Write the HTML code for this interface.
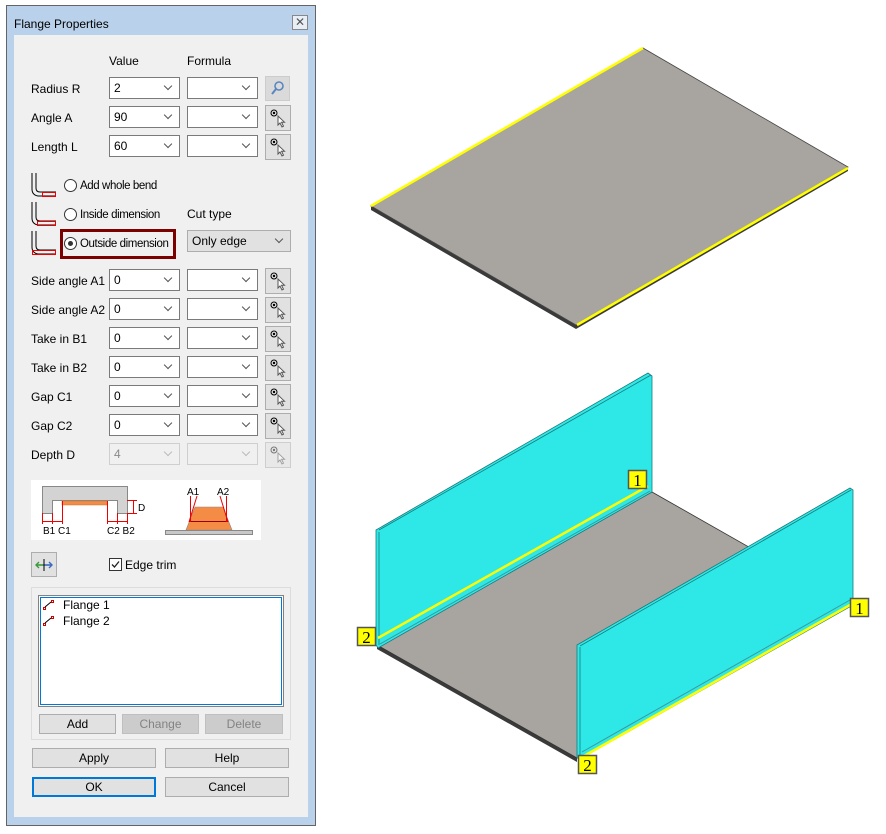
<!DOCTYPE html>
<html><head><meta charset="utf-8"><style>
*{margin:0;padding:0;box-sizing:border-box}
body{width:886px;height:834px;background:#fff;position:relative;overflow:hidden;font-family:"Liberation Sans",sans-serif;font-size:12px;color:#000}
.a{position:absolute}
.win{left:6px;top:5px;width:310px;height:821px;background:#b9d1ea;border:1px solid #646464}
.cont{left:14px;top:35px;width:294px;height:782px;background:#f0f0f0}
.lbl{position:absolute;font-size:12px;white-space:nowrap}
.rl{font-size:11.5px;letter-spacing:-0.4px;line-height:14px}
.cb{position:absolute;height:22px;background:#fff;border:1px solid #7a7a7a;font-size:12px;padding:3px 0 0 4px}
.cb::after{content:"";position:absolute;right:8px;top:5px;width:5px;height:5px;border-right:1px solid #555;border-bottom:1px solid #555;transform:rotate(45deg)}
.dis{background:#f0f0f0;border-color:#cfcfcf;color:#8a8a8a}
.dis::after{border-color:#bbb}
.pb{position:absolute;width:25px;height:25px;background:#e1e1e1;border:1px solid #adadad}
.btn{position:absolute;height:20px;background:#e1e1e1;border:1px solid #adadad;text-align:center;font-size:12px;line-height:18px}
.rd{position:absolute;width:13px;height:13px;border:1px solid #333;border-radius:50%;background:#fff}
</style></head><body>
<div class="a win"></div>
<div class="a lbl" style="left:14px;top:17px">Flange Properties</div>
<div class="a" style="left:292px;top:15px;width:16px;height:15px;border:1px solid #888;background:#e8eef5;font-size:12px;line-height:12px;text-align:center;color:#555">✕</div>
<div class="a cont"></div>

<div class="lbl" style="left:109px;top:54px">Value</div>
<div class="lbl" style="left:187px;top:54px">Formula</div>

<div class="lbl" style="left:31px;top:82px">Radius R</div>
<div class="cb" style="left:109px;top:77px;width:71px">2</div>
<div class="cb" style="left:187px;top:77px;width:71px"></div>
<div class="pb" style="left:265px;top:76px;background:#dadada;border-color:#ccc"><svg width="23" height="23"><circle cx="13" cy="9" r="4" fill="none" stroke="#5a86c0" stroke-width="1.6"/><line x1="10" y1="12" x2="6" y2="17" stroke="#5a86c0" stroke-width="2"/></svg></div>

<div class="lbl" style="left:31px;top:111px">Angle A</div>
<div class="cb" style="left:109px;top:106px;width:71px">90</div>
<div class="cb" style="left:187px;top:106px;width:71px"></div>

<div class="lbl" style="left:31px;top:140px">Length L</div>
<div class="cb" style="left:109px;top:135px;width:71px">60</div>
<div class="cb" style="left:187px;top:135px;width:71px"></div>

<svg class="a" style="left:28px;top:170px" width="30" height="90">
<g fill="none" stroke="#000"><path d="M4 3V19Q4 25 10 26H28"/><path d="M8 3V18Q8 22 12 22H28"/>
<path d="M4 32V48Q4 54 10 55H28"/><path d="M8 32V47Q8 51 12 51H28"/>
<path d="M4 61V77Q4 83 10 84H28"/><path d="M8 61V76Q8 80 12 80H28"/></g>
<g fill="none" stroke="#e00"><rect x="14.5" y="22.5" width="13" height="4"/><rect x="9.5" y="51.5" width="18" height="4"/><rect x="4.5" y="80.5" width="23" height="4"/></g></svg>

<div class="rd" style="left:64px;top:179px"></div><div class="lbl rl" style="left:80px;top:179px">Add whole bend</div>
<div class="rd" style="left:64px;top:208px"></div><div class="lbl rl" style="left:80px;top:208px">Inside dimension</div>
<div class="lbl" style="left:187px;top:207px">Cut type</div>
<div class="a" style="left:60px;top:229px;width:116px;height:30px;border:3px solid #7b0000"></div>
<div class="rd" style="left:64px;top:237px"></div><div class="a" style="left:68px;top:241px;width:5px;height:5px;border-radius:50%;background:#333"></div>
<div class="lbl rl" style="left:80px;top:237px">Outside dimension</div>
<div class="cb" style="left:187px;top:230px;width:104px;background:#e1e1e1;border-color:#adadad">Only edge</div>

<div class="lbl" style="left:31px;top:274px">Side angle A1</div>
<div class="lbl" style="left:31px;top:303px">Side angle A2</div>
<div class="lbl" style="left:31px;top:332px">Take in B1</div>
<div class="lbl" style="left:31px;top:361px">Take in B2</div>
<div class="lbl" style="left:31px;top:390px">Gap C1</div>
<div class="lbl" style="left:31px;top:419px">Gap C2</div>
<div class="lbl" style="left:31px;top:448px">Depth D</div>
<div class="cb" style="left:109px;top:269px;width:71px">0</div><div class="cb" style="left:187px;top:269px;width:71px"></div>
<div class="cb" style="left:109px;top:298px;width:71px">0</div><div class="cb" style="left:187px;top:298px;width:71px"></div>
<div class="cb" style="left:109px;top:327px;width:71px">0</div><div class="cb" style="left:187px;top:327px;width:71px"></div>
<div class="cb" style="left:109px;top:356px;width:71px">0</div><div class="cb" style="left:187px;top:356px;width:71px"></div>
<div class="cb" style="left:109px;top:385px;width:71px">0</div><div class="cb" style="left:187px;top:385px;width:71px"></div>
<div class="cb" style="left:109px;top:414px;width:71px">0</div><div class="cb" style="left:187px;top:414px;width:71px"></div>
<div class="cb dis" style="left:109px;top:443px;width:71px">4</div><div class="cb dis" style="left:187px;top:443px;width:71px"></div>

<svg class="a" style="left:265px;top:105px" width="26" height="370">
<defs><g id="pk"><rect x="0.5" y="0.5" width="25" height="25" fill="#e1e1e1" stroke="#adadad"/><circle cx="9" cy="8" r="3" fill="none" stroke="#000"/><circle cx="9" cy="8" r="1.2"/><path d="M13 11v9l2-2 2 4 1.5-.8-2-4h3z" fill="#fff" stroke="#555"/></g></defs>
<use href="#pk" y="0"/><use href="#pk" y="29"/>
<use href="#pk" y="163"/><use href="#pk" y="192"/><use href="#pk" y="221"/><use href="#pk" y="250"/><use href="#pk" y="279"/><use href="#pk" y="308"/>
<g opacity="0.5"><use href="#pk" y="337"/></g></svg>

<svg class="a" style="left:31px;top:480px" width="230" height="60" font-family="Liberation Sans" font-size="10">
<rect width="230" height="60" fill="#fff"/>
<path d="M11.5 6.5H96.5V33.5H86.5V20.5H21.5V33.5H11.5Z" fill="#d3d3d3" stroke="#888"/>
<rect x="31" y="21" width="45" height="4" fill="#f58c45" stroke="#c87030" stroke-width=".5"/>
<g stroke="#e00" fill="none"><path d="M11.5 33v11M21.5 33v11M31.5 21v23M76.5 21v23M86.5 33v11M96.5 33v11M12 41.5h19M77 41.5h19M96 20.5h10M96 33.5h10M102.5 21v12"/></g>
<text x="107" y="31">D</text>
<text x="12" y="54">B1 C1</text>
<text x="76" y="54">C2 B2</text>
<rect x="134.5" y="50.5" width="87" height="4" fill="#c8c8c8" stroke="#888"/>
<path d="M164 27H192L201 50H155Z" fill="#f58c45" stroke="#888" stroke-width=".6"/>
<line x1="158" y1="41.5" x2="197" y2="41.5" stroke="#900"/>
<g stroke="#e00" fill="none"><path d="M159.5 16v26M166 16l-8 26M195.5 16v26M189 16l8 26"/></g>
<text x="156" y="15">A1</text>
<text x="186" y="15">A2</text>
</svg>

<div class="pb" style="left:31px;top:552px;width:26px"><svg width="24" height="24"><line x1="4" y1="12" x2="12" y2="12" stroke="#3a9a3a" stroke-width="1.6"/><line x1="12" y1="12" x2="20" y2="12" stroke="#3a6ac0" stroke-width="1.6"/><path d="M7 9l-3 3 3 3" fill="none" stroke="#3a9a3a" stroke-width="1.4"/><path d="M17 9l3 3-3 3" fill="none" stroke="#3a6ac0" stroke-width="1.4"/><line x1="12" y1="6" x2="12" y2="18" stroke="#000"/></svg></div>
<div class="a" style="left:109px;top:558px;width:13px;height:13px;border:1px solid #333;background:#fff"><svg width="11" height="11" style="display:block"><path d="M2 5.5l2.5 2.5 4.5-5.5" fill="none" stroke="#222" stroke-width="1.3"/></svg></div>
<div class="lbl" style="left:125px;top:558px">Edge trim</div>

<div class="a" style="left:31px;top:587px;width:260px;height:153px;border:1px solid #dcdcdc"></div>
<div class="a" style="left:38px;top:595px;width:246px;height:112px;border:1px solid #828282;background:#fff"><div style="margin:1px;height:108px;border:1px solid #0078d7"></div></div>
<svg class="a" style="left:42px;top:599px" width="14" height="30"><g fill="none" stroke="#c00"><rect x="1.5" y="8.5" width="2" height="2"/><rect x="9.5" y="1.5" width="2" height="2"/><rect x="1.5" y="24.5" width="2" height="2"/><rect x="9.5" y="17.5" width="2" height="2"/></g><path d="M3 8l6-5M3 24l6-5" stroke="#000"/></svg>
<div class="lbl" style="left:63px;top:598px">Flange 1</div>
<div class="lbl" style="left:63px;top:614px">Flange 2</div>
<div class="btn" style="left:39px;top:714px;width:77px">Add</div>
<div class="btn" style="left:122px;top:714px;width:77px;background:#ccc;border-color:#bfbfbf;color:#838383">Change</div>
<div class="btn" style="left:205px;top:714px;width:78px;background:#ccc;border-color:#bfbfbf;color:#838383">Delete</div>
<div class="btn" style="left:32px;top:748px;width:124px">Apply</div>
<div class="btn" style="left:165px;top:748px;width:124px">Help</div>
<div class="btn" style="left:32px;top:777px;width:124px;border:2px solid #0078d7;line-height:16px">OK</div>
<div class="btn" style="left:165px;top:777px;width:124px">Cancel</div>

<svg class="a" style="left:0;top:0" width="886" height="834">
<path d="M371 206L576 325L848 167V171L576 329L371 210Z" fill="#3a3a3a"/>
<path d="M371 206L643 48L848 167L576 325Z" fill="#a8a4a0" stroke="#444" stroke-width=".8"/>
<line x1="371" y1="206" x2="643" y2="48" stroke="#ffff00" stroke-width="2.5"/>
<line x1="577" y1="325" x2="848" y2="168" stroke="#ffff00" stroke-width="2.5"/>
<path d="M377 645L577 758V762L377 649Z" fill="#3a3a3a"/>
<path d="M377 645L652 492L851 605L577 758Z" fill="#a8a4a0" stroke="#333" stroke-width=".8"/>
<path d="M376 530L648 373L652 376L652 492L378 648L376 645Z" fill="#2ee8e8" stroke="#1a7a7a" stroke-width=".8"/>
<line x1="379" y1="530" x2="651" y2="375" stroke="#1a7a7a" stroke-width=".8"/>
<line x1="379" y1="532" x2="379" y2="645" stroke="#1a7a7a" stroke-width=".8"/>
<line x1="378" y1="638" x2="648" y2="486" stroke="#ffff00" stroke-width="2.5"/>
<line x1="380" y1="644" x2="650" y2="491" stroke="#3a9a9a" stroke-width="1"/>
<path d="M577 645L850 488L853 490L853 605L580 759L577 758Z" fill="#2ee8e8" stroke="#1a7a7a" stroke-width=".8"/>
<line x1="580" y1="646" x2="851" y2="490" stroke="#1a7a7a" stroke-width=".8"/>
<line x1="580" y1="647" x2="580" y2="757" stroke="#1a7a7a" stroke-width=".8"/>
<line x1="582" y1="752" x2="850" y2="600" stroke="#3a9a9a" stroke-width="1"/>
<line x1="584" y1="756" x2="850" y2="605" stroke="#ffff00" stroke-width="2.5"/>
<g font-family="Liberation Serif" font-size="17" text-anchor="middle">
<rect x="628.5" y="470.5" width="18" height="18" fill="#ff0" stroke="#555" stroke-width="1.5"/><text x="637.5" y="486">1</text>
<rect x="850.5" y="598.5" width="18" height="18" fill="#ff0" stroke="#555" stroke-width="1.5"/><text x="859.5" y="614">1</text>
<rect x="357.5" y="627.5" width="18" height="18" fill="#ff0" stroke="#555" stroke-width="1.5"/><text x="366.5" y="643">2</text>
<rect x="578.5" y="755.5" width="18" height="18" fill="#ff0" stroke="#555" stroke-width="1.5"/><text x="587.5" y="771">2</text>
</g>
</svg>
</body></html>
